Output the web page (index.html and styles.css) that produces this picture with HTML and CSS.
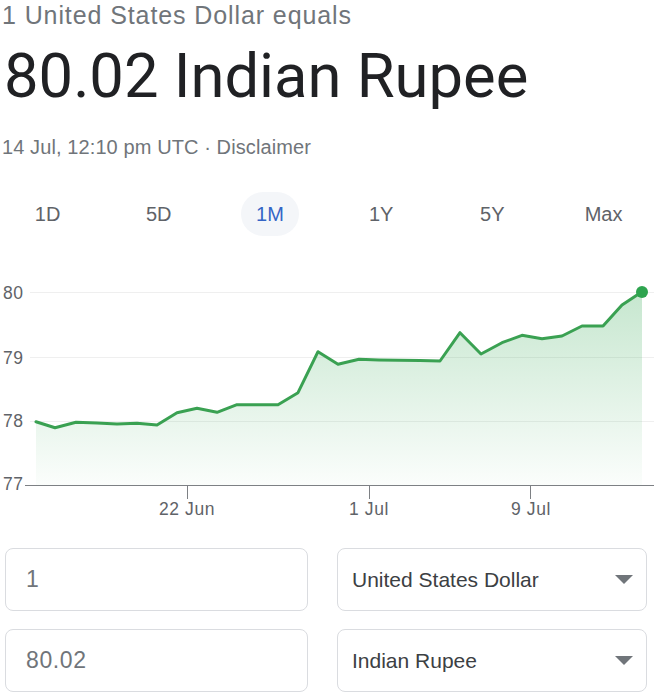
FILE: index.html
```html
<!DOCTYPE html>
<html lang="en">
<head>
<meta charset="utf-8">
<title>Currency converter</title>
<link rel="stylesheet" href="styles.css">
</head>
<body>
<main class="page">
  <header class="head">
    <p class="equals">1 United States Dollar equals</p>
    <h1 class="rate">80.02 Indian Rupee</h1>
    <p class="meta">14 Jul, 12:10 pm UTC · Disclaimer</p>
  </header>

  <nav class="tabs">
    <span class="tab">1D</span>
    <span class="tab">5D</span>
    <span class="tab tab-active"><span class="pill">1M</span></span>
    <span class="tab">1Y</span>
    <span class="tab">5Y</span>
    <span class="tab">Max</span>
  </nav>

  <svg class="chart" width="654" height="260" viewBox="0 270 654 260" xmlns="http://www.w3.org/2000/svg">
    <defs>
      <linearGradient id="area" x1="0" y1="0" x2="0" y2="1">
        <stop offset="0" stop-color="#34a853" stop-opacity="0.28"/>
        <stop offset="1" stop-color="#34a853" stop-opacity="0.02"/>
      </linearGradient>
    </defs>
    <g class="grid">
      <line x1="30" y1="292.5" x2="654" y2="292.5"/>
      <line x1="30" y1="357.5" x2="654" y2="357.5"/>
      <line x1="30" y1="421.5" x2="654" y2="421.5"/>
    </g>
    <path class="area" d="M36,421.7 L55,427.7 L76,422.3 L97,423 L117,424 L137,423.3 L157,425 L177,412.7 L197,408.3 L217,412.3 L237,404.7 L257,404.7 L278,404.7 L298,392.7 L318,351.7 L338,364.3 L359,359.3 L379,360 L399,360.3 L420,360.5 L440,361 L460,332.7 L481,354 L502,342.7 L522,335.3 L542,338.7 L562,336 L582,326 L603,326 L622,305 L642,291.7 L642,485 L36,485 Z"/>
    <polyline class="line" points="36,421.7 55,427.7 76,422.3 97,423 117,424 137,423.3 157,425 177,412.7 197,408.3 217,412.3 237,404.7 257,404.7 278,404.7 298,392.7 318,351.7 338,364.3 359,359.3 379,360 399,360.3 420,360.5 440,361 460,332.7 481,354 502,342.7 522,335.3 542,338.7 562,336 582,326 603,326 622,305 642,291.7"/>
    <circle class="dot" cx="642" cy="292" r="6"/>
    <g class="axis">
      <line x1="25" y1="485.5" x2="654" y2="485.5"/>
      <line x1="187.5" y1="485" x2="187.5" y2="499"/>
      <line x1="369.5" y1="485" x2="369.5" y2="499"/>
      <line x1="530.5" y1="485" x2="530.5" y2="499"/>
    </g>
    <g class="ylabels">
      <text x="3" y="299">80</text>
      <text x="3" y="364">79</text>
      <text x="3" y="427">78</text>
      <text x="3" y="490">77</text>
    </g>
    <g class="xlabels">
      <text x="187" y="515">22 Jun</text>
      <text x="369" y="515">1 Jul</text>
      <text x="531" y="515">9 Jul</text>
    </g>
  </svg>

  <form class="converter">
    <div class="field">1</div>
    <div class="field select">
      <span>United States Dollar</span>
      <svg class="caret" width="18" height="9" viewBox="0 0 18 9"><path d="M0 0 L18 0 L9 9 Z"/></svg>
    </div>
    <div class="field">80.02</div>
    <div class="field select">
      <span>Indian Rupee</span>
      <svg class="caret" width="18" height="9" viewBox="0 0 18 9"><path d="M0 0 L18 0 L9 9 Z"/></svg>
    </div>
  </form>
</main>
</body>
</html>
```

FILE: styles.css
```css
html, body {
  margin: 0;
  padding: 0;
  background: #ffffff;
}

body {
  width: 654px;
  height: 696px;
  overflow: hidden;
  font-family: "Liberation Sans", Arial, sans-serif;
}

.page {
  width: 654px;
}

.head {
  padding-left: 2px;
}

.equals {
  margin: 0;
  font-size: 25px;
  line-height: 31px;
  letter-spacing: 0.9px;
  color: #70757a;
}

.rate {
  margin: 9px 0 0 2px;
  font-family: Roboto, "Liberation Sans", sans-serif;
  font-weight: 400;
  font-size: 61.5px;
  line-height: 73px;
  color: #202124;
  letter-spacing: 0;
}

.meta {
  margin: 22px 0 0 0;
  font-size: 20px;
  line-height: 24px;
  letter-spacing: 0.1px;
  color: #70757a;
}

.tabs {
  margin: 33px 0 0 -8px;
  display: grid;
  grid-template-columns: repeat(6, 111.2px);
  height: 44px;
  align-items: center;
  justify-items: center;
  font-size: 20px;
  color: #5f6368;
}

.tab {
  line-height: 44px;
}

.pill {
  display: inline-block;
  width: 58px;
  height: 44px;
  line-height: 44px;
  text-align: center;
  border-radius: 22px;
  background: #f4f6f9;
  color: #3465c6;
}

.chart {
  display: block;
  margin-top: 34px;
}

.grid line {
  stroke: #efefef;
  stroke-width: 1;
}

.area {
  fill: url(#area);
}

.line {
  fill: none;
  stroke: #3aa152;
  stroke-width: 3;
  stroke-linejoin: round;
  stroke-linecap: round;
}

.dot {
  fill: #2ea44f;
}

.axis line {
  stroke: #7d8084;
  stroke-width: 1;
}

.ylabels text,
.xlabels text {
  font-family: "Liberation Sans", Arial, sans-serif;
  font-size: 17.5px;
  fill: #5f6368;
}

.ylabels text {
  letter-spacing: 0.6px;
}

.xlabels text {
  text-anchor: middle;
  letter-spacing: 0.6px;
}

.converter {
  margin: 18px 0 0 5px;
  display: grid;
  grid-template-columns: 303px 310px;
  grid-auto-rows: 63px;
  column-gap: 29px;
  row-gap: 18px;
}

.field {
  box-sizing: border-box;
  border: 1px solid #dadce0;
  border-radius: 8px;
  display: flex;
  align-items: center;
  padding: 0 20px;
  font-size: 23px;
  letter-spacing: 0.6px;
  color: #70757a;
}

.select {
  padding: 0 13px 0 14px;
  justify-content: space-between;
  font-size: 21px;
  letter-spacing: 0;
  color: #3c4043;
}

.caret {
  display: block;
  fill: #70757a;
}
```
